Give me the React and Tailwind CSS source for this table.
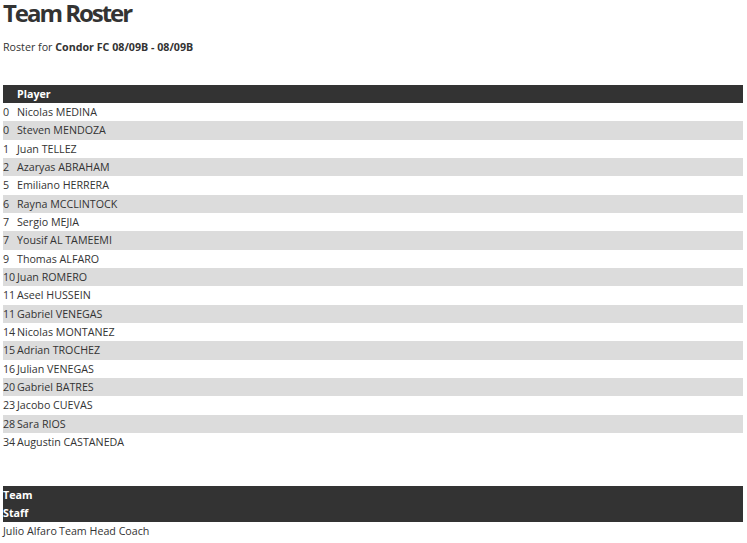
const players = [
  ["0", "Nicolas MEDINA"],
  ["0", "Steven MENDOZA"],
  ["1", "Juan TELLEZ"],
  ["2", "Azaryas ABRAHAM"],
  ["5", "Emiliano HERRERA"],
  ["6", "Rayna MCCLINTOCK"],
  ["7", "Sergio MEJIA"],
  ["7", "Yousif AL TAMEEMI"],
  ["9", "Thomas ALFARO"],
  ["10", "Juan ROMERO"],
  ["11", "Aseel HUSSEIN"],
  ["11", "Gabriel VENEGAS"],
  ["14", "Nicolas MONTANEZ"],
  ["15", "Adrian TROCHEZ"],
  ["16", "Julian VENEGAS"],
  ["20", "Gabriel BATRES"],
  ["23", "Jacobo CUEVAS"],
  ["28", "Sara RIOS"],
  ["34", "Augustin CASTANEDA"],
];

export default function App() {
  return (
    <div
      className="min-h-[543px] bg-white px-[3px] pr-[4px] text-[10.7px] text-[#333]"
      style={{ fontFamily: '"Open Sans", sans-serif' }}
    >
      <h1 className="text-[24px] font-bold leading-[26px] tracking-[-0.085em] text-[#333]">
        Team Roster
      </h1>
      <p className="mt-[14px] leading-[15px]">
        Roster for <b>Condor FC 08/09B - 08/09B</b>
      </p>

      <div className="mt-[30px]">
        <div className="flex h-[18px] items-center bg-[#333] font-bold text-white">
          <span className="w-[14px]" />
          <span>Player</span>
        </div>
        {players.map(([num, name], i) => (
          <div
            key={i}
            className={
              "flex h-[18.33px] items-center " + (i % 2 === 1 ? "bg-[#dcdcdc]" : "bg-white")
            }
          >
            <span className="w-[14px] shrink-0">{num}</span>
            <span>{name}</span>
          </div>
        ))}
      </div>

      <div className="mt-[35px]">
        <div className="flex h-[36px] items-center bg-[#333] font-bold leading-[18px] text-white">
          <span>
            Team
            <br />
            Staff
          </span>
        </div>
        <div className="flex h-[18px] items-center">
          <span className="w-[56px] shrink-0 whitespace-nowrap">Julio Alfaro</span>
          <span>Team Head Coach</span>
        </div>
      </div>
    </div>
  );
}
